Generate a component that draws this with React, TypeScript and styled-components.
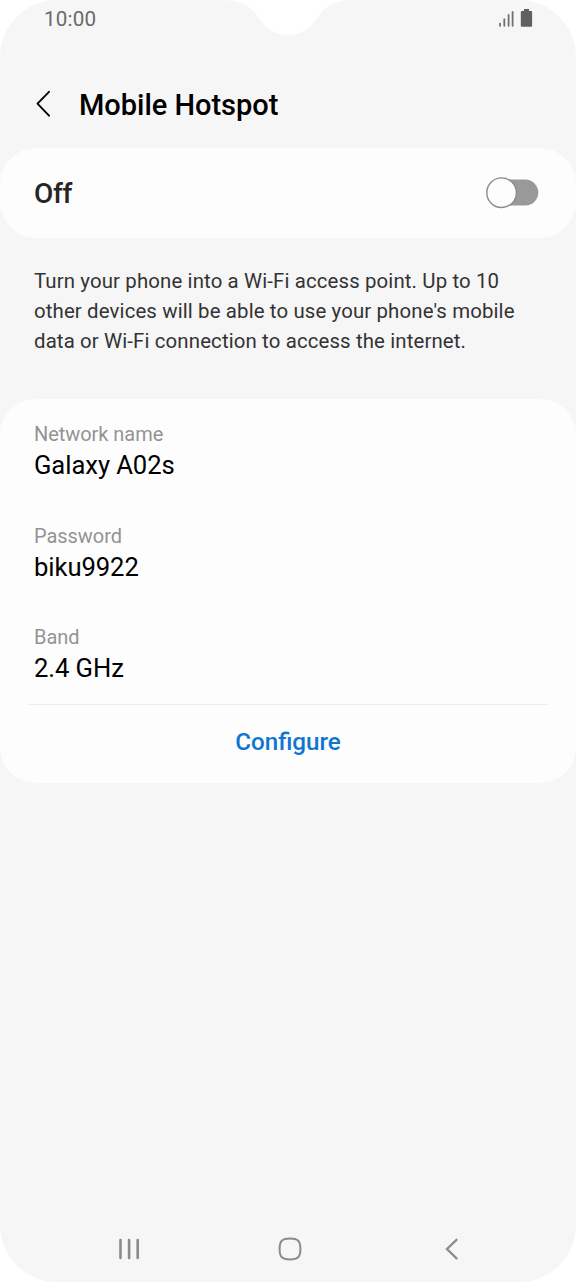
import React from "react";
import styled, { createGlobalStyle } from "styled-components";

const GlobalStyle = createGlobalStyle`
  * { box-sizing: border-box; }
  body { margin: 0; background: #ffffff; }
`;

const Screen = styled.main`
  position: relative;
  display: flex;
  flex-direction: column;
  width: 576px;
  height: 1282px;
  overflow: hidden;
  border-radius: 57px;
  background: #f6f6f6;
  color: #000;
  font-family: Roboto, sans-serif;
`;

const Cutout = styled.svg`
  position: absolute;
  top: 0;
  left: 224px;
`;

const StatusBar = styled.header`
  display: flex;
  align-items: center;
  justify-content: space-between;
  height: 37px;
  padding: 0 43px 0 44px;
`;

const Clock = styled.span`
  font-size: 20.6px;
  line-height: 24px;
  letter-spacing: 0.2px;
  color: #6a6a6a;
`;

const StatusIcons = styled.svg`
  display: block;
`;

const TitleBar = styled.div`
  display: flex;
  align-items: center;
  gap: 27px;
  height: 111px;
  padding: 23px 36px 0;
`;

const BackButton = styled.button`
  display: flex;
  padding: 0;
  border: 0;
  background: none;
`;

const Title = styled.h1`
  margin: 0;
  padding-top: 2px;
  font-size: 29px;
  line-height: 34px;
  font-weight: 500;
  letter-spacing: -0.02px;
`;

const Card = styled.section`
  flex: none;
  border-radius: 36px;
  background: #fdfdfd;
`;

const ToggleCard = styled(Card)`
  display: flex;
  align-items: center;
  justify-content: space-between;
  height: 90px;
  padding: 0 37px 0 34px;
`;

const ToggleLabel = styled.span`
  padding-top: 2px;
  font-size: 28px;
  line-height: 34px;
  font-weight: 500;
  letter-spacing: -0.3px;
  color: #252525;
`;

const Description = styled.p`
  margin: 0;
  height: 161px;
  padding: 29px 34px 0;
  font-size: 20.4px;
  line-height: 29.8px;
  letter-spacing: 0.13px;
  color: #333;
  white-space: nowrap;
`;

const DetailsCard = styled(Card)`
  height: 384px;
`;

const FieldList = styled.dl`
  display: flex;
  flex-direction: column;
  gap: 39.7px;
  height: 306px;
  margin: 0 28px;
  padding: 20px 6px 0;
  border-bottom: 1px solid #ececec;
`;

const Field = styled.div`
  height: 62px;
`;

const FieldLabel = styled.dt`
  height: 30px;
  font-size: 20px;
  line-height: 30px;
  letter-spacing: -0.05px;
  color: #939393;
`;

const FieldValue = styled.dd`
  margin: 0;
  font-size: 25.6px;
  line-height: 32px;
  letter-spacing: -0.06px;
`;

const ConfigureButton = styled.button`
  display: block;
  width: 100%;
  height: 74px;
  padding: 0;
  border: 0;
  background: none;
  font: 500 24.2px/28px Roboto, sans-serif;
  color: #0f75d1;
`;

const NavBar = styled.nav`
  display: flex;
  align-items: center;
  justify-content: space-between;
  height: 68px;
  margin-top: auto;
  padding: 1px 117px 0;
`;

const HomeIcon = styled.svg`
  margin-right: 4px;
`;

const fields = [
  { label: "Network name", value: "Galaxy A02s" },
  { label: "Password", value: "biku9922" },
  { label: "Band", value: "2.4 GHz" },
];

export default function App() {
  return (
    <>
      <GlobalStyle />
      <Screen>
        <Cutout width="128" height="36" viewBox="0 0 128 36">
          <path
            d="M0 0 C18 1 28 7 34 17 C41 28 51 35 64 35 C77 35 87 28 94 17 C100 7 110 1 128 0 Z"
            fill="#fff"
          />
        </Cutout>
        <StatusBar>
          <Clock>10:00</Clock>
          <StatusIcons width="34" height="21" viewBox="0 0 34 21">
            <path
              d="M1 15.6V17.8M5.3 11.2V17.8M9.6 6.9V17.8M13.6 3.9V17.8"
              stroke="#707070"
              strokeWidth="1.8"
              strokeLinecap="round"
            />
            <path
              d="M25 1h5v2h2.1a1 1 0 0 1 1 1v13.7a1 1 0 0 1-1 1h-9.3a1 1 0 0 1-1-1V4a1 1 0 0 1 1-1H25z"
              fill="#606060"
            />
          </StatusIcons>
        </StatusBar>
        <TitleBar>
          <BackButton aria-label="Back">
            <svg width="16" height="28" viewBox="0 0 16 28" fill="none" stroke="#000" strokeWidth="1.9" strokeLinecap="round" strokeLinejoin="round">
              <path d="M13 1.8 1.5 13.7 13 25.7" />
            </svg>
          </BackButton>
          <Title>Mobile Hotspot</Title>
        </TitleBar>
        <ToggleCard>
          <ToggleLabel>Off</ToggleLabel>
          <svg width="53" height="32" viewBox="0 0 53 32">
            <rect x="8" y="2.6" width="44.3" height="26" rx="13" fill="#999" />
            <circle cx="15.6" cy="15.7" r="14.8" fill="#fdfdfd" stroke="#8b8b8b" strokeWidth="1.4" />
          </svg>
        </ToggleCard>
        <Description>
          Turn your phone into a Wi-Fi access point. Up to 10
          <br />
          other devices will be able to use your phone's mobile
          <br />
          data or Wi-Fi connection to access the internet.
        </Description>
        <DetailsCard>
          <FieldList>
            {fields.map((f) => (
              <Field key={f.label}>
                <FieldLabel>{f.label}</FieldLabel>
                <FieldValue>{f.value}</FieldValue>
              </Field>
            ))}
          </FieldList>
          <ConfigureButton>Configure</ConfigureButton>
        </DetailsCard>
        <NavBar>
          <svg width="24" height="24" viewBox="0 0 24 24" stroke="#8b8b8b" strokeWidth="2.6" strokeLinecap="round">
            <path d="M3.5 3V21M12.1 3V21M20.7 3V21" />
          </svg>
          <HomeIcon width="24" height="24" viewBox="0 0 24 24" fill="none" stroke="#8b8b8b" strokeWidth="2">
            <path d="M12 1.6c8 0 10.4 2.4 10.4 10.4S20 22.4 12 22.4 1.6 20 1.6 12 4 1.6 12 1.6z" />
          </HomeIcon>
          <svg width="16" height="24" viewBox="0 0 16 24" fill="none" stroke="#8b8b8b" strokeWidth="2.3" strokeLinecap="round" strokeLinejoin="miter">
            <path d="M13.5 2.8 4 12 13.5 21.4" />
          </svg>
        </NavBar>
      </Screen>
    </>
  );
}
